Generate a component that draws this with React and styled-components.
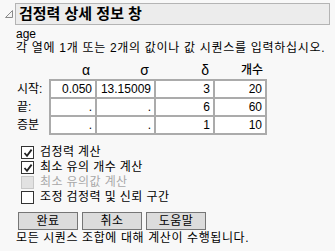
import React from 'react'
import styled, { createGlobalStyle } from 'styled-components'

const Global = createGlobalStyle`
body {
  margin: 0;
  background: #f8f8f8;
  font-family: "Liberation Sans", "Noto Sans CJK KR", sans-serif;
  font-size: 12px;
  color: #000;
}
`
const Page = styled.div`
width: 335px;
height: 251px;
padding: 3px 5px 0 5px;
box-sizing: border-box;
overflow: hidden;
`
const Header = styled.div`
display: flex;
align-items: center;
gap: 2px;
`
const Title = styled.div`
flex: 1;
height: 22px;
box-sizing: border-box;
background: #ececec;
border: 1px solid #b4b4b4;
font-size: 15px;
font-weight: bold;
line-height: 19px;
padding-left: 3px;
`
const Body = styled.div`
padding-left: 11px;
`
const Line = styled.div`
line-height: 14px;
margin-top: ${p => p.top || 0}px;
letter-spacing: ${p => p.spread || 0}px;
white-space: nowrap;
`
const Table = styled.table`
border-collapse: collapse;
margin-top: 8px;
margin-left: 1px;
td, th { padding: 0; }
`
const Head = styled.th`
text-align: right;
font-weight: ${p => p.word ? 500 : 'normal'};
font-size: ${p => p.word ? 12 : 14}px;
height: 16px;
line-height: 14px;
padding-right: ${p => p.pad}px !important;
vertical-align: top;
`
const RowLabel = styled.td`
width: 32px;
text-align: left;
height: 18px;
line-height: 16px;
vertical-align: middle;
`
const Cell = styled.td`
width: ${p => p.w}px;
box-sizing: border-box;
height: 18px;
border: 2px solid #ababab;
background: #fff;
text-align: right;
padding-right: 3px !important;
line-height: 14px;
`
const Checks = styled.div`
display: flex;
flex-direction: column;
gap: 2px;
margin-top: 11px;
padding-left: 5px;
`
const CheckRow = styled.label`
display: flex;
align-items: center;
gap: 6px;
height: 13px;
line-height: 13px;
letter-spacing: 0.4px;
color: ${p => p.disabled ? '#a8a8a8' : '#000'};
`
const Box = styled.span`
width: 13px;
height: 13px;
box-sizing: border-box;
border: 1px solid ${p => p.disabled ? '#c8c8c8' : '#333'};
background: ${p => p.disabled ? '#e2e2e2' : '#fff'};
display: flex;
align-items: center;
justify-content: center;
`
const Buttons = styled.div`
display: flex;
gap: 4px;
margin-top: 8px;
padding-left: 2px;
`
const Button = styled.button`
width: 60px;
height: 18px;
box-sizing: border-box;
background: #dcdcdc;
border: 1px solid #767676;
font-family: inherit;
font-size: 12px;
line-height: 14px;
letter-spacing: 0.4px;
padding: 0;
color: #000;
`

const Tick = () => (
  <svg width="10" height="10" viewBox="0 0 10 10">
    <path d="M1.5 5 L4 7.8 L8.6 1.6" fill="none" stroke="#222" strokeWidth="1.8" />
  </svg>
)

function Check({ label, checked, disabled }) {
  return (
    <CheckRow disabled={disabled}>
      <Box disabled={disabled}>{checked && <Tick />}</Box>
      {label}
    </CheckRow>
  )
}

const rows = [
  ['시작:', '0.050', '13.15009', '3', '20'],
  ['끝:', '.', '.', '6', '60'],
  ['증분', '.', '.', '1', '10'],
]
const widths = [46, 59, 59, 52]

export default function App() {
  return (
    <Page>
      <Global />
      <Header>
        <svg width="8" height="8" viewBox="0 0 8 8">
          <path d="M7.5 0.5 L7.5 7.5 L0.5 7.5 Z" fill="#f4f4f4" stroke="#8a8a8a" strokeWidth="1" />
        </svg>
        <Title>검정력 상세 정보 창</Title>
      </Header>
      <Body>
        <Line top={2}>age</Line>
        <Line top={0} spread={0.7}>각 열에 1개 또는 2개의 값이나 값 시퀀스를 입력하십시오.</Line>
        <Table>
          <thead>
            <tr>
              <th />
              <Head pad={6}>α</Head>
              <Head pad={6}>σ</Head>
              <Head pad={5}>δ</Head>
              <Head word pad={3}>개수</Head>
            </tr>
          </thead>
          <tbody>
            {rows.map(r => (
              <tr key={r[0]}>
                <RowLabel>{r[0]}</RowLabel>
                {r.slice(1).map((v, i) => <Cell key={i} w={widths[i]}>{v}</Cell>)}
              </tr>
            ))}
          </tbody>
        </Table>
        <Checks>
          <Check label="검정력 계산" checked />
          <Check label="최소 유의 개수 계산" checked />
          <Check label="최소 유의값 계산" disabled />
          <Check label="조정 검정력 및 신뢰 구간" />
        </Checks>
        <Buttons>
          <Button>완료</Button>
          <Button>취소</Button>
          <Button>도움말</Button>
        </Buttons>
        <Line top={1} spread={0.6}>모든 시퀀스 조합에 대해 계산이 수행됩니다.</Line>
      </Body>
    </Page>
  )
}
